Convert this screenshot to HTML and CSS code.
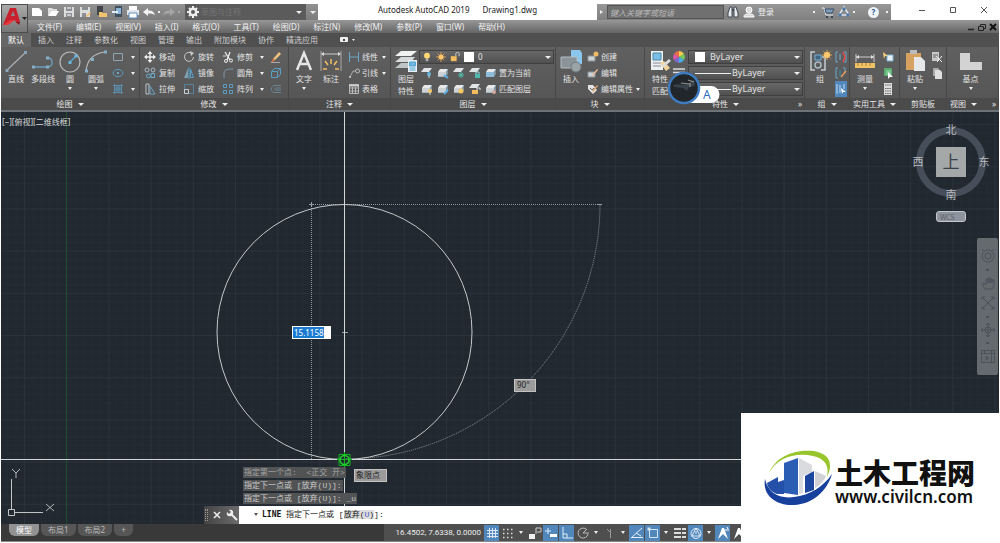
FILE: index.html
```html
<!DOCTYPE html>
<html lang="zh-CN">
<head>
<meta charset="utf-8">
<title>Autodesk AutoCAD 2019 Drawing1.dwg</title>
<link rel="stylesheet" href="styles.css">
</head>
<body>
<svg class="defs" aria-hidden="true">
  <symbol id="layers" viewBox="0 0 12 12"><path d="M3 2h8l-2 3H1z" fill="#e8e8e8"/><path d="M1 5h8v5H1z" fill="#a9b5bd"/><path d="M1 6h8M1 8h8" stroke="#eee"/><path d="M9 5l2-3v5l-2 3z" fill="#8296a2"/></symbol>
  <symbol id="sheet" viewBox="0 0 12 12"><path d="M3 1h8L8 5H0z" fill="#dfe4e6"/></symbol>
</svg>
<div class="app">
  <header class="head">
    <button class="logo" aria-label="应用程序菜单"><svg width="26" height="26" viewBox="0 0 26 26"><path d="M1 19L8 2h6l4 14-4 1-1-3H8l-2 5z" fill="#c8202c"/><path d="M9 10l2-5 2 5z" fill="#8a8a8a"/><path d="M1 19l7-5 5 0-7 5z" fill="#e5373c"/><path d="M14 16l4 0-1 3z" fill="#8b141c"/><path d="M20 11h5l-2.500 3z" fill="#222"/></svg></button>
    <div class="title">
      <div class="quick">
        <button aria-label="新建"><svg viewBox="0 0 14 14"><path d="M2 3h7l3 3v5H2z" fill="#fff"/></svg></button>
        <button aria-label="打开"><svg viewBox="0 0 14 14"><path d="M2 3h4l1 1h4v2H5l-3 5z" fill="#ddd"/><path d="M5 6h8l-3 5H2z" fill="#fff"/></svg></button>
        <button aria-label="保存"><svg viewBox="0 0 14 14"><path d="M2 2h10v10H2z" fill="#ddd"/><path d="M4 2h6v4H4zM4 8h6v4H4z" fill="#8b8f94"/><path d="M5 3h4M5 10h4" stroke="#fff"/></svg></button>
        <button aria-label="另存为"><svg viewBox="0 0 14 14"><path d="M2 2h10v10H2z" fill="#ddd"/><path d="M4 2h6v3H4zM4 8h4v4H4z" fill="#8b8f94"/><path d="M8 11l4-4 1 1-4 4z" fill="#f4b860"/></svg></button>
        <button aria-label="从移动设备打开"><svg viewBox="0 0 14 14"><path d="M3 1h6v9H3z" fill="#404347"/><path d="M5 7h3l1 1h4v4H5z" fill="#f0c36c"/></svg></button>
        <button aria-label="保存到移动设备"><svg viewBox="0 0 14 14"><path d="M5 1h7v11H5z" fill="#40505f"/><path d="M6 3h5v6H6z" fill="#8cb5d8"/><path d="M2 7h6" stroke="#def" stroke-width="2"/></svg></button>
        <button aria-label="打印"><svg viewBox="0 0 14 14"><path d="M3 1h8v4H3z" fill="#fff"/><path d="M1 5h12v5H1z" fill="#e4e7ea"/><path d="M3 8h8v5H3z" fill="#fff" stroke="#5b8fc0"/></svg></button>
        <button class="gap" aria-label="放弃"><svg viewBox="0 0 14 14"><path d="M1 7l5-4v2.500c4 0 6 1 7 5-2-2-4-2-7-2V11z" fill="#f3f3f3"/></svg></button>
        <i class="dot"></i>
        <button aria-label="重做"><svg viewBox="0 0 14 14"><path d="M13 7L8 3v2.500c-4 0-6 1-7 5 2-2 4-2 7-2V11z" fill="#a5a5a5"/></svg></button>
        <i class="dot dim"></i>
        <button class="space"><svg viewBox="0 0 14 14"><circle cx="7" cy="7" r="3.200" fill="none" stroke="#eee" stroke-width="2.400"/><path d="M7 1v3M7 10v3M1 7h3M10 7h3M3 3l1.500 1.500M9.500 9.500L11 11M11 3L9.500 4.500M4.500 9.500L3 11" stroke="#eee" stroke-width="2"/></svg><span>草图与注释</span><i class="caret"></i></button>
        <button class="more" aria-label="自定义"><i class="caret"></i></button>
      </div>
      <h1><span>Autodesk AutoCAD 2019</span><span>Drawing1.dwg</span></h1>
      <div class="search">
        <button class="expand" aria-label="展开搜索"><i class="arrow"></i></button>
        <input type="text" aria-label="搜索" placeholder="键入关键字或短语">
        <button aria-label="查找"><svg viewBox="0 0 14 14"><path d="M2 12V8l2-6h2v10zM8 12V2h2l2 6v4z" fill="#e8ebee" stroke="#404750"/><path d="M6 5h2" stroke="#404750" stroke-width="2"/></svg></button>
        <button class="login"><svg viewBox="0 0 14 14"><circle cx="7" cy="5" r="3" fill="#ddd" stroke="#fff"/><path d="M2 12c0-3 2-3 5-3s5 0 5 3z" fill="#d5d5d5" stroke="#fff"/></svg><span>登录</span></button>
        <i class="dot"></i>
        <button class="cart" aria-label="应用商店"><svg viewBox="0 0 14 14"><path d="M1 3h2l2 7h7" fill="none" stroke="#e9edf2"/><path d="M4 4h9l-2 4H5z" fill="#7f9cba" stroke="#38516d"/><circle cx="6" cy="12" r="1" fill="#234"/><circle cx="11" cy="12" r="1" fill="#234"/></svg></button>
        <button aria-label="连接"><svg viewBox="0 0 14 14"><path d="M7 2l5 8H2z" fill="none" stroke="#dce8f5" stroke-width="1.500"/><circle cx="7" cy="4" r="1.800" fill="#4e78a2"/><circle cx="3" cy="10" r="1.800" fill="#4e78a2"/><circle cx="11" cy="10" r="1.800" fill="#4e78a2"/></svg></button>
        <i class="dot"></i>
        <button class="help" aria-label="帮助">?</button>
        <i class="dot"></i>
      </div>
      <div class="win">
        <button aria-label="最小化"><svg viewBox="0 0 10 10"><path d="M2 5.500h6" stroke="#555"/></svg></button>
        <button aria-label="最大化"><svg viewBox="0 0 10 10"><path d="M2.500 2.500h5v5h-5z" fill="none" stroke="#555"/></svg></button>
        <button aria-label="关闭"><svg viewBox="0 0 10 10"><path d="M2 2l6 6M8 2L2 8" stroke="#555"/></svg></button>
      </div>
    </div>
    <nav class="menu">
      <a href="#">文件(F)</a><a href="#">编辑(E)</a><a href="#">视图(V)</a><a href="#">插入(I)</a><a href="#">格式(O)</a><a href="#">工具(T)</a><a href="#">绘图(D)</a><a href="#">标注(N)</a><a href="#">修改(M)</a><a href="#">参数(P)</a><a href="#">窗口(W)</a><a href="#">帮助(H)</a>
      <div class="doc">
        <button aria-label="最小化文档"><svg viewBox="0 0 10 10"><path d="M2 7.500h6" stroke="#222" stroke-width="1.500"/></svg></button>
        <button aria-label="还原文档"><svg viewBox="0 0 10 10"><path d="M1.500 4.500h5v4h-5zM3.500 4V2.500h5v4H7" fill="none" stroke="#222"/></svg></button>
        <button aria-label="关闭文档"><svg viewBox="0 0 10 10"><path d="M2 2l6 6M8 2L2 8" stroke="#111" stroke-width="2"/></svg></button>
      </div>
    </nav>
  </header>
  <nav class="tabs">
    <a class="on" href="#">默认</a><a href="#">插入</a><a href="#">注释</a><a href="#">参数化</a><a href="#">视图</a><a href="#">管理</a><a href="#">输出</a><a href="#">附加模块</a><a href="#">协作</a><a href="#">精选应用</a>
    <button aria-label="最小化功能区"><svg width="16" height="8" viewBox="0 0 16 8"><rect x="1" y="1" width="8" height="5" rx="1" fill="#eee"/><rect x="4" y="3" width="2" height="2" fill="#444"/><path d="M13 3h3l-1.500 2z" fill="#eee"/></svg></button>
  </nav>
  <main class="ribbon">
    <section class="panel">
      <div class="body">
        <button class="big"><svg viewBox="0 0 24 24"><path d="M3 21L21 4" stroke="#a9b0b4" stroke-width="1.200"/><path d="M1.500 20h3v3h-3zM20 2h3v3h-3z" fill="#8ba5b6"/></svg>直线</button>
        <button class="big wide"><svg viewBox="0 0 24 24"><path d="M3 18h14c6-1 5-9 0-9" fill="none" stroke="#6d9fbd" stroke-width="1.300"/><path d="M1 16.500h3v3H1zM15 16.500h3v3h-3zM15 7.500h3v3h-3z" fill="#86aec6"/></svg>多段线</button>
        <button class="big"><svg viewBox="0 0 24 24"><circle cx="12" cy="13" r="10" fill="none" stroke="#b7babb" stroke-width="1.200"/><path d="M12 13l6-6" stroke="#58a9d5" stroke-width="1.300"/><path d="M10.500 12h3v3h-3zM16.500 5.500h3v3h-3z" fill="#6bb5dd"/></svg>圆<i class="caret"></i></button>
        <button class="big"><svg viewBox="0 0 24 24"><path d="M2 22C3 12 8 4 22 3" fill="none" stroke="#b7babb" stroke-width="1.200"/><path d="M1 20.500h3v3H1zM7 9h3v3H7zM20 1.500h3v3h-3z" fill="#86aec6"/></svg>圆弧<i class="caret"></i></button>
        <div class="stack">
          <button aria-label="矩形"><svg viewBox="0 0 12 12"><path d="M1.500 2.500h9v7h-9z" fill="none" stroke="#8fa2ae"/></svg><i class="caret"></i></button>
          <button aria-label="椭圆"><svg viewBox="0 0 12 12"><ellipse cx="6" cy="6" rx="5" ry="3.500" fill="none" stroke="#589bc2"/><circle cx="6" cy="6" r="1" fill="#7bbfe4"/></svg><i class="caret"></i></button>
          <button aria-label="图案填充"><svg viewBox="0 0 12 12"><path d="M2.500 1v10M9.500 1v10M1 2.500h10M1 9.500h10M2.500 5h7M2.500 7h7M5 2v8M7 2v8" stroke="#5c8faf"/></svg><i class="caret"></i></button>
        </div>
      </div>
      <h2>绘图<i class="caret"></i></h2>
    </section>
    <section class="panel">
      <div class="body modify">
        <button><svg viewBox="0 0 12 12"><path d="M6 1v10M1 6h10" stroke="#eee" stroke-width="1.400"/><path d="M6 0l2.500 3h-5zM6 12l2.500-3h-5zM0 6l3-2.500v5zM12 6L9 3.500v5z" fill="#eee"/></svg>移动</button>
        <button><svg viewBox="0 0 12 12"><path d="M9 2.500A4.500 4.500 0 1 0 10.500 6" fill="none" stroke="#ccc"/><path d="M7 0l4 2-3 3z" fill="#ccc"/></svg>旋转</button>
        <button><svg viewBox="0 0 12 12"><path d="M3 1l5 8M8 1L5 9" stroke="#eee" stroke-width="1.300"/><circle cx="4" cy="10" r="1.500" fill="none" stroke="#eee"/><circle cx="9" cy="9.500" r="1.500" fill="none" stroke="#eee"/><path d="M1 5h3" stroke="#ddd"/></svg>修剪<i class="caret"></i></button>
        <button aria-label="删除"><svg viewBox="0 0 12 12"><path d="M3 8l6-7 2 2-6 6z" fill="#f1c27d"/><path d="M1 11l2-3 2 2z" fill="#e9763c"/><path d="M1 11.500h9" stroke="#aaa"/></svg></button>
        <button><svg viewBox="0 0 12 12"><circle cx="3" cy="3" r="2" fill="none" stroke="#a8bac5"/><circle cx="9" cy="3" r="2" fill="none" stroke="#a8bac5"/><circle cx="4.500" cy="9" r="2" fill="none" stroke="#6caed3"/><path d="M7 6.500h3.500v4H7z" fill="none" stroke="#6caed3"/></svg>复制</button>
        <button><svg viewBox="0 0 12 12"><path d="M5 1v10H1z" fill="#7e9dad"/><path d="M7.500 2v8.500h3z" fill="none" stroke="#57a1ca"/><path d="M6 0v12" stroke="#57a1ca"/></svg>镜像</button>
        <button><svg viewBox="0 0 12 12"><path d="M2 11V7c0-4 2-5 9-5" fill="none" stroke="#7d9aaa"/></svg>圆角<i class="caret"></i></button>
        <button aria-label="分解"><svg viewBox="0 0 12 12"><path d="M1.500 4.500h6v6h-6zM1.500 4.500l3-3h6l-3 3M10.500 1.500v6l-3 3" fill="none" stroke="#5a9dc3"/></svg></button>
        <button><svg viewBox="0 0 12 12"><path d="M2 1v10h3V1z" fill="none" stroke="#b7c0c5"/><path d="M6 3l5 8H6z" fill="none" stroke="#6ba3c2"/></svg>拉伸</button>
        <button><svg viewBox="0 0 12 12"><path d="M1.500 1.500h9v9h-9z" fill="none" stroke="#55849f"/><path d="M1.500 6.500h4v4h-4z" fill="none" stroke="#c8d1d5"/></svg>缩放</button>
        <button><svg viewBox="0 0 12 12"><path d="M1.500 1.500h3v3h-3zM7.500 1.500h3v3h-3zM1.500 7.500h3v3h-3zM7.500 7.500h3v3h-3z" fill="none" stroke="#5b9dc2"/></svg>阵列<i class="caret"></i></button>
        <button aria-label="偏移"><svg viewBox="0 0 12 12"><path d="M11 2.500H5c-5 0-5 7 0 7h6M11 5H6c-2 0-2 2 0 2h5" fill="none" stroke="#6c8593"/></svg></button>
      </div>
      <h2>修改<i class="caret"></i></h2>
    </section>
    <section class="panel">
      <div class="body note">
        <button class="big"><svg viewBox="0 0 24 24"><path d="M5 21L12 4l7 17M7.500 15h9" fill="none" stroke="#e6e6e6" stroke-width="2.500"/></svg>文字<i class="caret"></i></button>
        <button class="big"><svg viewBox="0 0 24 24"><path d="M2 2v20M22 2v20" stroke="#aaa"/><path d="M3 5h18" stroke="#ccc"/><path d="M2 5l3-2v4zM22 5l-3-2v4z" fill="#ddd"/><path d="M12 10v5M6 12l3 4M18 12l-3 4M4 20h4M16 20h4" stroke="#f0bd62" stroke-width="1.500"/></svg>标注</button>
        <div class="stack">
          <button><svg viewBox="0 0 12 12"><path d="M1.500 1v10M10.500 1v10M2 6h8" stroke="#6ba7ca"/></svg>线性<i class="caret"></i></button>
          <button><svg viewBox="0 0 12 12"><path d="M2 10l3-6h3" fill="none" stroke="#aaa"/><circle cx="9.500" cy="4" r="2" fill="none" stroke="#bbb"/><circle cx="2" cy="10" r="1" fill="#ccc"/></svg>引线<i class="caret"></i></button>
          <button><svg viewBox="0 0 12 12"><path d="M1.500 1.500h9v9h-9zM1 5h10M1 8h10M4.500 4v7M7.500 4v7" fill="none" stroke="#b9b9b9"/><path d="M1 2.500h10" stroke="#ccc" stroke-width="2"/></svg>表格</button>
        </div>
      </div>
      <h2>注释<i class="caret"></i></h2>
    </section>
    <section class="panel">
      <div class="body">
        <button class="big"><svg viewBox="0 0 24 24"><path d="M7 2h16l-6 5H1z" fill="#f0f2f2"/><path d="M7 8h14l-4 5H1z" fill="#d6dadb"/><path d="M7 14h12l-4 5H1z" fill="#c0c6c8"/><path d="M14 11h9v12h-9z" fill="#e8f1f6"/><path d="M15.500 13h6v4h-6zM15.500 19h6M15.500 21h6" stroke="#4ba2d3" fill="#73b8de"/></svg>图层<br>特性</button>
        <div class="layerbox">
          <button class="combo" aria-label="图层">
            <svg viewBox="0 0 12 12"><circle cx="6" cy="4.500" r="3.500" fill="#ffd873"/><path d="M4.500 8h3v3h-3z" fill="#b5b5b5"/></svg>
            <svg viewBox="0 0 12 12"><path d="M6 0v12M0 6h12M2 2l8 8M10 2l-8 8" stroke="#eaa95c"/><circle cx="6" cy="6" r="3" fill="#ffc767"/></svg>
            <svg viewBox="0 0 12 12"><path d="M7 5V2c0-2 4-2 4 0v3" fill="none" stroke="#ddd"/><path d="M1 5h7v6H1z" fill="#f3bc5d"/></svg>
            <b class="chip"></b><span>0</span><i class="caret"></i>
          </button>
          <div class="line">
            <button aria-label="关闭图层"><svg viewBox="0 0 12 12"><use href="#sheet"/><circle cx="8" cy="7" r="2" fill="#62b5db"/><path d="M8 8v3" stroke="#cde"/></svg></button>
            <button aria-label="隔离图层"><svg viewBox="0 0 12 12"><use href="#layers"/><path d="M7 8l4 3" stroke="#5eb3e8" stroke-width="2"/></svg></button>
            <button aria-label="冻结图层"><svg viewBox="0 0 12 12"><use href="#sheet"/><path d="M8 5v6M5 8h6M6 6l4 4M10 6l-4 4" stroke="#50bba9"/></svg></button>
            <button aria-label="锁定图层"><svg viewBox="0 0 12 12"><use href="#sheet"/><path d="M6 7h5v4H6z" fill="#4eb7ae"/><path d="M7 7V5h3v2" fill="none" stroke="#9dd"/></svg></button>
            <button><svg viewBox="0 0 12 12"><use href="#layers"/><path d="M1 5h8v5H1z" fill="#8ebcdb"/></svg>置为当前</button>
          </div>
          <div class="line">
            <button aria-label="打开图层"><svg viewBox="0 0 12 12"><use href="#layers"/><circle cx="9" cy="8" r="2" fill="#f5c966"/><path d="M9 9v3" stroke="#ddd"/></svg></button>
            <button aria-label="取消隔离"><svg viewBox="0 0 12 12"><use href="#layers"/><path d="M7 11l4-4" stroke="#5eb3e8" stroke-width="2"/></svg></button>
            <button aria-label="解冻图层"><svg viewBox="0 0 12 12"><use href="#layers"/><circle cx="8" cy="8" r="2.500" fill="#f5c966"/></svg></button>
            <button aria-label="解锁图层"><svg viewBox="0 0 12 12"><use href="#sheet"/><path d="M3 7h6v4H3z" fill="#f3bc5d"/><path d="M8 7V5h3v2" fill="none" stroke="#ddd"/></svg></button>
            <button><svg viewBox="0 0 12 12"><use href="#layers"/><circle cx="9" cy="9" r="2" fill="#d1a8a0"/></svg>匹配图层</button>
          </div>
        </div>
      </div>
      <h2>图层<i class="caret"></i></h2>
    </section>
    <section class="panel">
      <div class="body">
        <button class="big"><svg viewBox="0 0 24 24"><path d="M12 1h9l2 3v11H12z" fill="#8bc7ec"/><path d="M2 8h16v11H2z" fill="#8a9499" stroke="#b4bec3"/><circle cx="17" cy="18" r="5" fill="#9ba3a7" stroke="#6f7a80"/></svg>插入</button>
        <div class="stack">
          <button><svg viewBox="0 0 12 12"><path d="M1 5h7v5H1z" fill="#ccd2d5" stroke="#89959b"/><circle cx="9" cy="3" r="2.500" fill="#edbb68"/></svg>创建</button>
          <button><svg viewBox="0 0 12 12"><path d="M1 5h7v5H1z" fill="#ccd2d5" stroke="#89959b"/><path d="M5 8l5-6 1 1-5 6z" fill="#edbb98"/></svg>编辑</button>
          <button><svg viewBox="0 0 12 12"><path d="M1 2h5l4 5-4 4-5-5z" fill="#e4e4e4"/><path d="M5 8l5-6 1 1-5 6z" fill="#d9a46b"/><path d="M3 5l2 2 2-2" fill="none" stroke="#666"/></svg>编辑属性<i class="caret"></i></button>
        </div>
      </div>
      <h2>块<i class="caret"></i></h2>
    </section>
    <section class="panel">
      <div class="body">
        <button class="big"><svg viewBox="0 0 24 24"><path d="M3 2h12v19H3z" fill="#eceff0"/><path d="M5 4h8v7H5z" fill="#78bfe8" stroke="#4d88a8"/><path d="M5 14h8M5 17h8" stroke="#889"/><path d="M12 14l4-2 6 7-4 3z" fill="#f1d49c"/><path d="M14 16l7-6 2 2-7 6z" fill="#ddd"/></svg>特性<br>匹配</button>
        <div class="props">
          <svg viewBox="0 0 12 12"><path d="M6 6V0a6 6 0 0 1 5 3z" fill="#f5d04d"/><path d="M6 6l5-3a6 6 0 0 1 0 6z" fill="#76c95c"/><path d="M6 6l5 3a6 6 0 0 1-5 3z" fill="#48aee0"/><path d="M6 6v6a6 6 0 0 1-5-3z" fill="#7d6bd1"/><path d="M6 6L1 9a6 6 0 0 1 0-6z" fill="#d859a8"/><path d="M6 6L1 3a6 6 0 0 1 5-3z" fill="#ee6c4b"/></svg>
          <button class="combo" aria-label="颜色"><b class="chip"></b><span>ByLayer</span><i class="caret"></i></button>
          <svg viewBox="0 0 12 12"><path d="M0 2h12M0 5.500h12M0 10h12" stroke="#ddd" stroke-width="1.500"/></svg>
          <button class="combo" aria-label="线宽"><u></u><span>ByLayer</span><i class="caret"></i></button>
          <svg viewBox="0 0 12 12"><path d="M0 3h12M0 6h8M0 9h12" stroke="#ddd"/></svg>
          <button class="combo" aria-label="线型"><u></u><span>ByLayer</span><i class="caret"></i></button>
          <div class="float"><svg width="54" height="34" viewBox="0 0 54 34"><path d="M17 15h27a8.500 8.500 0 0 1 0 17H17z" fill="#fff"/><circle cx="17" cy="17" r="15" fill="#20262a" stroke="#3e7bc0" stroke-width="2.500"/><path d="M6 14c6-2 10 1 14-1l7-4 1 6-6 1-2 4-4-3-9-1z" fill="#394248"/><path d="M14 12l8 1M21 9l6 2M23 12v4" stroke="#8f928f" stroke-width="1.200"/></svg><span>A</span></div>
        </div>
      </div>
      <h2>特性<i class="caret"></i><em>»</em></h2>
    </section>
    <section class="panel">
      <div class="body">
        <button class="big"><svg viewBox="0 0 24 24"><path d="M7 3H3v18h4M14 8h3v13h-4" fill="none" stroke="#c5ccd0" stroke-width="1.500"/><path d="M7 6h6v5H7z" fill="#426580" stroke="#76b4da"/><circle cx="10" cy="16" r="3" fill="none" stroke="#aebcc4" stroke-width="1.500"/><path d="M19 1v10M14 6h10M15.500 2.500l7 7M22.500 2.500l-7 7" stroke="#e6a44d"/><circle cx="19" cy="6" r="3" fill="#ffc96d"/></svg>组</button>
        <div class="stack mini">
          <button aria-label="取消编组"><svg viewBox="0 0 12 12"><path d="M3 1H1v10h2M9 1h2v10H9" fill="none" stroke="#69a8cf"/><path d="M4 3h2v6H4z" fill="#689"/><path d="M8 1l2 5-2 5" fill="none" stroke="#df4d4d" stroke-width="1.500"/></svg></button>
          <button aria-label="编辑组"><svg viewBox="0 0 12 12"><path d="M3 1H1v10h2M8 1h2v5" fill="none" stroke="#69a8cf"/><path d="M4 3h2v6H4z" fill="#478"/><path d="M6 10l5-6" stroke="#e39a5f" stroke-width="1.500"/></svg></button>
          <button class="lit" aria-label="组选择"><svg viewBox="0 0 12 12"><path d="M2 1v10M5 2v8M9 1v5" stroke="#c0ddf1"/><path d="M6 5l5 4-3 0-1 2z" fill="#fff"/></svg></button>
        </div>
      </div>
      <h2>组<i class="caret"></i></h2>
    </section>
    <section class="panel">
      <div class="body">
        <button class="big"><svg viewBox="0 0 24 24"><path d="M3 5v8M21 5v8M3 8h18" stroke="#ccc"/><path d="M3 8l3-2v4zM21 8l-3-2v4z" fill="#ddd"/><path d="M2 14h20v5H2z" fill="#f1c367"/><path d="M5 14v3M9 14v3M13 14v3M17 14v3" stroke="#a78238"/></svg>测量<i class="caret"></i></button>
        <div class="stack mini">
          <button aria-label="快速选择"><svg viewBox="0 0 12 12"><path d="M5 4h6v6H5z" fill="#e8f0f4" stroke="#7db5d4"/><path d="M1 1l5 4-3 0-1 3z" fill="#f5d078"/></svg></button>
          <button aria-label="全部选择"><svg viewBox="0 0 12 12"><path d="M2 1h8v8H2z" fill="#58ae70"/><path d="M4 3h5v5H4z" fill="#80c792"/><path d="M6 5l5 5-3 0-2 2z" fill="#fff"/></svg></button>
          <button aria-label="计算器"><svg viewBox="0 0 12 12"><path d="M2 0h8v12H2z" fill="#ddd"/><path d="M3 2h6M3 5.500h6M3 8h6M3 10.500h6" stroke="#666" stroke-dasharray="1.500 .7"/></svg></button>
        </div>
      </div>
      <h2>实用工具<i class="caret"></i></h2>
    </section>
    <section class="panel">
      <div class="body">
        <button class="big"><svg viewBox="0 0 24 24"><path d="M3 4h15v17H3z" fill="#d7a15f"/><path d="M7 1h7v4H7z" fill="#bbb"/><path d="M11 8h7l4 4v10H11z" fill="#e5e7e8"/></svg>粘贴<i class="caret"></i></button>
        <div class="stack mini">
          <button aria-label="剪切"><svg viewBox="0 0 12 12"><path d="M1 1h7v9H1z" fill="#c9c9c9"/><path d="M2 4h5M2 6h5" stroke="#666"/><path d="M5 5l6 6M11 5l-5 6" stroke="#eee"/></svg></button>
          <button aria-label="复制剪裁"><svg viewBox="0 0 12 12"><path d="M2 1h5l1 1v7H2z" fill="#aaa"/><path d="M4 3h5l2 2v7H4z" fill="#e0e0e0"/></svg></button>
        </div>
      </div>
      <h2>剪贴板</h2>
    </section>
    <section class="panel">
      <div class="body mid">
        <button class="big"><svg viewBox="0 0 24 24"><path d="M1 4h10v9h12v8H1z" fill="#d3d3d3"/></svg>基点<i class="caret"></i></button>
      </div>
      <h2>视图<i class="caret"></i><em>»</em></h2>
    </section>
  </main>
  <section class="canvas">
    <svg class="draw" width="100%" height="100%">
      <defs><pattern id="grid" width="42.200" height="42.200" patternUnits="userSpaceOnUse" x="24" y="12"><path d="M8.900 0v42.200M17.400 0v42.200M25.800 0v42.200M34.200 0v42.200M0 8.900h42.200M0 17.400h42.200M0 25.800h42.200M0 34.200h42.200" stroke="#232b33"/><path d="M.5 0v42.200M0 .5h42.200" stroke="#2a333c"/></pattern></defs>
      <rect width="100%" height="100%" fill="url(#grid)"/>
      <path d="M66.500 0v412" stroke="#1b4d2b"/>
      <g fill="none" stroke="#8d969e" stroke-dasharray="1 1"><path d="M311.500 92V347"/><path d="M311 92.500H600"/><path d="M600 92.500A255 255 0 0 1 345 347"/></g>
      <path d="M309 92.500h5M311.500 90v5M309 347.500h5M597 92.500h5M342 220.500h6" stroke="#9aa2a9"/>
      <circle cx="344.500" cy="220" r="127.500" fill="none" stroke="#c4c8cb"/>
      <path d="M344.500 0V394" stroke="#d3d6d8"/>
      <line x1="0" x2="100%" y1="347.500" y2="347.500" stroke="#d3d6d8"/>
      <path d="M339 342.500h11v11h-11zM344.500 340v16M337 347.500h15" fill="none" stroke="#10b51e"/><circle cx="344.500" cy="348" r="4.500" fill="none" stroke="#1ed62a" stroke-width="1.500"/>
      <path d="M11.500 367v31M14 400.500h29M8.500 397.500h6v6h-6z" fill="none" stroke="#c2c5c8"/>
      <path d="M12 357l4 4 4-4M16 361v5M46 392l8 7M54 392l-8 7" fill="none" stroke="#b4b8bb"/>
    </svg>
    <button class="view">[−][俯视][二维线框]</button>
    <input class="length" type="text" aria-label="长度" value="15.1158">
    <output class="tip angle">90°</output>
    <output class="tip snap">象限点</output>
    <div class="compass">
      <svg width="80" height="84" viewBox="0 0 80 84"><circle cx="40" cy="42" r="31.500" fill="none" stroke="#464e5a" stroke-width="7"/><rect x="25" y="27" width="30" height="30" fill="#a4a8a9"/><g fill="#b8bbbe" font-size="11" text-anchor="middle"><text x="40" y="14">北</text><text x="40" y="79">南</text><text x="7" y="46">西</text><text x="73" y="46">东</text></g><text x="40" y="48" font-size="17" text-anchor="middle" fill="#3d4246">上</text></svg>
      <button>WCS</button>
    </div>
    <div class="navbar">
      <button aria-label="控制盘"><svg viewBox="0 0 16 16"><circle cx="8" cy="8" r="6"/><circle cx="8" cy="8" r="3"/><path d="M2 2h2M12 2h2"/></svg></button><i></i>
      <button aria-label="平移"><svg viewBox="0 0 16 16"><path d="M5 14L2 9l2-1 2 2V4h2v4-5h2v5-4h2v4-3h2v6l-2 3z"/></svg></button>
      <button aria-label="缩放"><svg viewBox="0 0 16 16"><path d="M2 2l12 12M14 2L2 14M2 5V2h3M11 2h3v3M2 11v3h3M11 14h3v-3"/></svg></button><i></i>
      <button aria-label="动态观察"><svg viewBox="0 0 16 16"><path d="M8 1v14M1 8h14M6 3l2-2 2 2M6 13l2 2 2-2M3 6L1 8l2 2M13 6l2 2-2 2"/><circle cx="8" cy="8" r="3"/></svg></button><i></i>
      <button aria-label="ShowMotion"><svg viewBox="0 0 16 16"><path d="M1.500 1.500h13v12h-13zM1 4.500h14M4.500 1v3M11.500 1v12M6 7l3 2-3 2z"/></svg></button>
    </div>
    <div class="console">
      <div class="log"><span>指定第一个点:&nbsp; &lt;正交 开&gt;</span><span>指定下一点或 [放弃(U)]:</span><span>指定下一点或 [放弃(U)]: _u</span></div>
      <div class="cmd">
        <div class="grip"><i></i><button aria-label="关闭"><svg viewBox="0 0 12 12"><path d="M3 3l6 6M9 3L3 9" stroke="#eee" stroke-width="1.500"/></svg></button><button aria-label="自定义"><svg viewBox="0 0 12 12"><path d="M5 5l6 6" stroke="#eee" stroke-width="2"/><path d="M1 3l2 2 2-2-2-2c3-1 5 1 4 4l-2 2c-3 1-5-1-4-4z" fill="#eee"/></svg></button></div>
        <p><i class="caret"></i><b>LINE</b> 指定下一点或 [<mark>放弃(<span>U</span>)</mark>]:</p>
      </div>
    </div>
  </section>
  <footer class="foot">
    <nav class="sheets"><a class="on" href="#">模型</a><a href="#">布局1</a><a href="#">布局2</a><a href="#">+</a></nav>
    <div class="status">
      <span>16.4502, 7.6338, 0.0000</span>
      <button class="lit" aria-label="栅格"><svg viewBox="0 0 14 14"><path d="M4.500 2v10M7.500 2v10M10.500 2v10M2 4.500h11M2 7.500h11M2 10.500h11" stroke="#dbe8f4"/></svg></button>
      <button aria-label="捕捉"><svg viewBox="0 0 14 14"><path d="M2 3.500h10M2 7.500h10M2 11.500h10" stroke="#ddd" stroke-width="1.500" stroke-dasharray="1.500 2.500"/></svg></button><i class="caret"></i>
      <button class="first" aria-label="推断约束"><svg viewBox="0 0 14 14"><path d="M1 8h6v5H1z" fill="#eee"/><path d="M8 8V2h5v4H9" fill="none" stroke="#ccc"/></svg></button>
      <button class="lit" aria-label="动态输入"><svg viewBox="0 0 14 14"><path d="M4 2v6M1 5h6" stroke="#def"/><path d="M6 8h7v3H6z" fill="#fff"/></svg></button>
      <button class="lit" aria-label="正交"><svg viewBox="0 0 14 14"><path d="M3 1v11h10M3 8h4v4" fill="none" stroke="#e3eef8"/></svg></button>
      <button aria-label="极轴"><svg viewBox="0 0 14 14"><path d="M12 8a5 5 0 1 1-2-5M7 7h6M7 7l4-4" fill="none" stroke="#bbb"/></svg></button><i class="caret"></i>
      <button aria-label="等轴测"><svg viewBox="0 0 14 14"><path d="M4 3l4 4M7.500 3v9" stroke="#999"/></svg></button><i class="caret"></i>
      <button class="lit" aria-label="对象捕捉追踪"><svg viewBox="0 0 14 14"><path d="M1 12L12 2M2 11.500h11M6 7l5 3" stroke="#e3eef8"/></svg></button>
      <button class="lit" aria-label="对象捕捉"><svg viewBox="0 0 14 14"><path d="M3.500 3.500h8v8h-8z" fill="none" stroke="#d5e5f3"/><path d="M1.500 1.500h3v3h-3z" fill="#d5e5f3"/></svg></button><i class="caret"></i>
      <button aria-label="线宽"><svg viewBox="0 0 14 14"><path d="M1 3h12M1 7h12M1 11h12" stroke="#ddd" stroke-width="2" stroke-dasharray="7 1"/></svg></button>
      <button class="lit" aria-label="三维捕捉"><svg viewBox="0 0 14 14"><circle cx="7" cy="7.500" r="5" fill="none" stroke="#e3eef8"/><path d="M7 2l4 8H3zM7 5v3" fill="none" stroke="#e3eef8"/></svg></button><i class="caret"></i>
      <button class="lit" aria-label="注释可见性"><svg viewBox="0 0 14 14"><path d="M2 13l4-11h2l4 11-5-5z" fill="#fff"/><path d="M11 1l1 2M9 4h4" stroke="#fff"/></svg></button>
      <button aria-label="自动缩放"><svg viewBox="0 0 14 14"><path d="M2 13l4-11h2l4 11-5-5z" fill="#fff"/></svg></button>
    </div>
  </footer>
  <aside class="brand">
    <svg width="70" height="58" viewBox="0 0 70 58"><path d="M3 33l11-6v5l6-2v14h-7C8 42 4 39 3 33z" fill="#2450aa"/><path d="M20 13l14-5v37l-14-2z" fill="#2b5db5"/><path d="M35 8l13 7v7l-9 4v17l-4 1z" fill="#d9dbdf"/><path d="M41 26l9-5v19l-9 3z" fill="#1d479f"/><path d="M51 21l11 5c-2 5-6 9-11 12z" fill="#cfd1d5"/><path d="M5 23C12 6 31-1 50 1c17 3 19 14 13 26 2-11-1-18-14-21C31 2 13 8 5 23z" fill="#98c52c"/><path d="M1 29c-3 17 12 27 29 26 19-1 33-14 38-31-9 13-22 21-38 23C15 49 4 43 1 29z" fill="#17409c"/></svg>
    <div><strong>土木工程网</strong><span>www.civilcn.com</span></div>
  </aside>
</div>
</body>
</html>
```
FILE: styles.css
```css
* { box-sizing: border-box; }
body { margin: 0; background: #fff; font: 8px/12px "Noto Sans", "Noto Sans CJK SC", sans-serif; color: #e4e4e4; }
button { display: flex; align-items: center; margin: 0; padding: 0; border: 0; background: none; color: inherit; font: inherit; white-space: nowrap; }
a { color: inherit; text-decoration: none; white-space: nowrap; }
svg { display: block; flex: none; }
h1, h2, p { margin: 0; font: inherit; }
.defs { position: absolute; width: 0; height: 0; }
.app { position: relative; display: flex; flex-direction: column; height: 100vh; padding: 0 1px 1px; overflow: hidden; }

.caret { flex: none; width: 0; height: 0; border: 2px solid transparent; border-top: 3px solid #eee; border-bottom: 0; }
.dot { flex: none; width: 2px; height: 2px; background: #eee; }
.dim { background: #aaa; }
.arrow { border: 2px solid transparent; border-left: 3px solid #eee; border-right: 0; }
.chip { width: 10px; height: 10px; background: #fff; }

.head { display: grid; grid-template: 20px 13px / 27px minmax(0, 1fr); }
.logo { grid-row: 1 / 3; margin-top: 4px; border: 1px solid #4d4d4d; background: linear-gradient(#aaa, #777); overflow: hidden; }
.title { display: flex; align-items: stretch; color: #222; }
.quick { display: flex; flex: none; align-items: center; gap: 2px; width: 290px; margin-top: 4px; padding-left: 2px; background: linear-gradient(#919191, #7c7c7c); }
.quick svg, .search svg { width: 14px; height: 14px; }
.space { flex: 1; align-self: stretch; gap: 1px; margin-left: 3px; padding: 0 4px 0 1px; background: #5b5b5b; color: #747474; }
.space span { flex: 1; text-align: left; }
.space .caret, .more .caret, .panel h2 .caret { border-width: 3px 3px 0; }
.more { width: 10px; justify-content: center; }
h1 { display: flex; flex: 1; align-items: center; justify-content: center; gap: 13px; font-size: 8px; white-space: nowrap; }
.search { display: flex; flex: none; align-items: center; gap: 2px; width: 294px; margin-top: 4px; padding-right: 3px; background: linear-gradient(#979797, #7f7f7f); color: #eee; }
.expand { width: 8px; justify-content: center; }
.search input { flex: none; width: 117px; height: 14px; border: 1px solid #555; background: #707070; padding: 0 2px; font: italic 8px/12px "Noto Sans CJK SC", sans-serif; }
.search input::placeholder { color: #b8b8b8; }
.login { flex: 1; gap: 2px; }
.cart { margin-left: 4px; }
.help { width: 11px; height: 11px; justify-content: center; margin: 0 5px 0 11px; border-radius: 50%; background: #eef3f8; color: #2a5a91; font-weight: 700; }
.win { display: flex; flex: none; align-items: center; justify-content: space-around; width: 92px; margin: 0 0 0 16px; }
.win svg, .doc svg { width: 10px; height: 10px; }
.menu { display: flex; align-items: center; gap: 14px; padding-left: 9px; background: linear-gradient(#979797, #656565); color: #f0f0f0; }
.doc { display: flex; gap: 1px; margin-left: auto; padding-right: 1px; }

.tabs { display: flex; flex: none; gap: 12px; height: 14px; padding-right: 8px; background: #505050; color: #cfcfcf; line-height: 14px; }
.tabs .on { margin-right: -5px; padding: 0 7px; background: #676767; color: #fff; }
.tabs button { margin-left: 9px; }

.ribbon { display: grid; flex: none; grid-template-columns: 139fr 149fr 102fr 165fr 89fr 160fr 45fr 50fr 47fr 52fr; height: 65px; border-bottom: 2px solid #6d7378; background: #555; }
.panel { display: flex; flex-direction: column; min-width: 0; border-right: 1px solid #484848; background: linear-gradient(#606060, #545454); }
.body { display: flex; flex: 1; padding: 2px 1px 0 2px; }
.panel h2 { display: flex; flex: none; align-items: center; justify-content: center; gap: 5px; height: 12px; background: #4b4b4b; white-space: nowrap; }
.panel em { margin-left: auto; margin-right: 2px; font-style: normal; }
.panel h2:has(em) { padding-left: 3px; justify-content: flex-start; gap: 5px; }
.panel:nth-child(6) h2:has(em) { padding-left: 67px; }
.big { display: flex; flex: none; flex-direction: column; align-items: center; align-self: flex-start; width: 26px; line-height: 12px; }
.big svg { width: 24px; height: 24px; }
.big .caret { margin-top: 2px; }
.wide { width: 28px; }
.stack { display: flex; flex: 1; flex-direction: column; min-width: 0; padding-left: 3px; }
.stack button { gap: 2px; height: 16px; }
.stack svg, .modify svg, .line svg, .props svg { width: 12px; height: 12px; }
.stack .caret, .modify .caret { margin-left: auto; margin-right: 3px; }
.mini { align-items: center; padding: 0; }
.lit { background: #5187bb; }
.modify { display: grid; grid-template: repeat(3, 16px) / 39px 39px 48px 14px; padding-left: 4px; align-content: start; }
.modify button { gap: 3px; }
.modify .caret { margin-right: 6px; }
.modify svg { flex: none; }
.note .big { margin-right: 1px; }
.layerbox { display: flex; flex: 1; flex-direction: column; min-width: 0; }
.combo { display: flex; width: 100%; height: 14px; gap: 5px; margin: 1px 0; padding: 0 2px; border: 1px solid #3f3f3f; background: linear-gradient(#686868, #505050); }
.combo svg { width: 10px; height: 10px; }
.combo .caret { margin-left: auto; border-width: 3px 3px 0; }
.layerbox .combo { gap: 4px; }
.line { display: flex; gap: 4px; height: 16px; padding-left: 2px; }
.line button { gap: 2px; }
.props { position: relative; display: grid; flex: 1; grid-template: repeat(3, 16px) / 12px minmax(0, 1fr); gap: 0 3px; align-items: center; align-content: start; }
.props .combo { padding-left: 6px; font-size: 9px; }
.props u { flex: none; width: 36px; height: 1px; margin-right: -4px; background: #eee; }
.float { position: absolute; left: -6px; top: 22px; width: 54px; height: 34px; }
.props .float svg { width: 54px; height: 34px; }
.float span { position: absolute; left: 36px; top: 16px; color: #2d6fc0; font-size: 12px; line-height: 16px; }
.mid { justify-content: center; padding-right: 6px; }

.canvas { position: relative; flex: 1; min-height: 0; overflow: hidden; background: #212830; }
.draw { position: absolute; inset: 0 auto auto -1px; }
.view { position: absolute; left: 1px; top: 4px; color: #d8d8d8; }
.length { position: absolute; left: 291px; top: 214px; width: 39px; height: 13px; border: 1px solid #fff; padding: 0 0 0 1px; background: linear-gradient(90deg, #1b7bd1 31px, #fff 31px); color: #fff; font: 8px/11px "Noto Sans", sans-serif; }
.tip { position: absolute; padding: 0 3px 0 2px; border: 1px solid #c2c2c2; background: #9b9b9b; color: #222; line-height: 10px; }
.angle { left: 513px; top: 267px; width: 22px; height: 13px; }
.snap { left: 353px; top: 357px; width: 33px; height: 13px; padding-left: 1px; }
.compass { position: absolute; top: 8px; right: 8px; display: flex; flex-direction: column; align-items: center; gap: 7px; font-family: "Noto Sans CJK SC", sans-serif; }
.compass button { width: 30px; height: 11px; padding-left: 3px; border: 1px solid #c3c8d0; border-radius: 3px; background: #8e949d; color: #5a6069; font-size: 7px; }
.navbar { position: absolute; top: 126px; right: 1px; display: flex; flex-direction: column; align-items: center; justify-content: space-around; width: 21px; height: 137px; padding: 8px 0; border-radius: 2px; background: #656a6f; }
.navbar svg { width: 16px; height: 16px; fill: none; stroke: #4b5158; }
.navbar i { width: 3px; height: 2px; background: #4b5158; }
.console { position: absolute; left: 203px; right: 0; bottom: 0; font-family: "Liberation Mono", "Noto Sans CJK SC", monospace; }
.log { display: flex; flex-direction: column; align-items: flex-start; gap: 2px; margin: 0 0 2px 39px; line-height: 11px; }
.log span { padding: 0 1px; background: #515354; color: #c9c9c9; }
.log span:first-child { color: #a4a4a4; }
.cmd { display: flex; height: 18px; background: #fff; color: #222; }
.grip { display: flex; align-items: center; gap: 3px; width: 35px; padding-left: 1px; background: linear-gradient(90deg, #444, #6b6b6b); }
.grip i { width: 3px; height: 12px; border: 1px dotted #999; border-width: 0 1px; }
.grip svg { width: 12px; height: 12px; }
.cmd p { padding-left: 15px; line-height: 18px; white-space: nowrap; }
.cmd b { margin-left: 4px; color: #111; font-family: "DejaVu Sans Mono", monospace; }
.cmd .caret { display: inline-block; border-top-color: #555; vertical-align: middle; }
.cmd mark { background: #dcdcdc; color: inherit; }
.cmd mark span { color: #4455bb; }

.foot { display: flex; flex: none; height: 18px; border-bottom: 1px solid #888; background: #393939; }
.sheets { display: flex; flex: none; align-items: flex-start; gap: 2px; width: 383px; padding-left: 8px; color: #bbb; }
.sheets a { height: 12px; padding: 0 7px; border-radius: 0 0 6px 6px; background: #565656; }
.sheets .on { background: #929292; color: #fff; }
.status { display: flex; flex: none; align-items: center; gap: 1px; background: #4f4f4f; }
.status > span { width: 99px; padding-right: 2px; color: #eee; font-family: Roboto, sans-serif; text-align: right; white-space: nowrap; }
.status button { width: 15px; height: 16px; justify-content: center; }
.status svg { width: 14px; height: 14px; }
.status .caret { margin: 0 3px; }

.brand { position: absolute; right: 0; bottom: 0; display: flex; align-items: flex-start; gap: 1px; width: 259px; height: 130px; padding: 37px 0 0 23px; background: #fff; color: #111; }
.brand div { display: flex; flex-direction: column; padding-top: 6px; }
.brand strong { font: 900 28px/32px "Noto Sans CJK SC", sans-serif; }
.brand span { font: 600 17px/18px "Noto Sans", sans-serif; }
```
